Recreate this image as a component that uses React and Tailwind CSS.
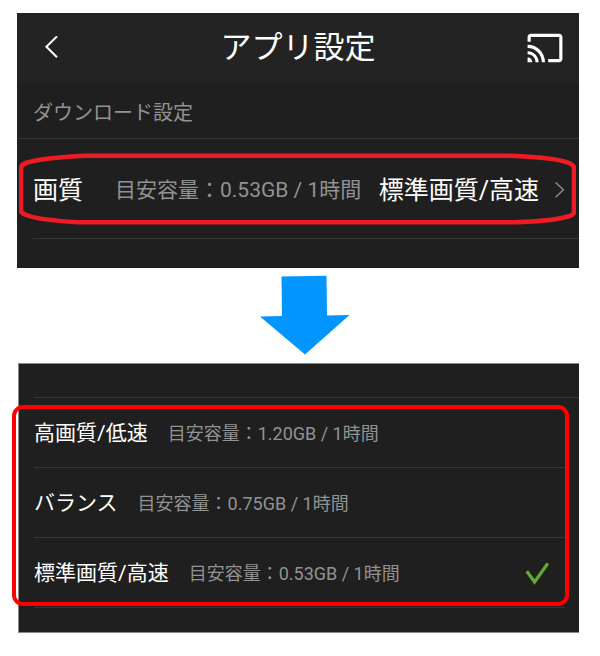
import React, { useState } from 'react';

// Download quality choices, with the storage used by one hour of video
const QUALITIES = [
  { id: 'high', label: '高画質/低速', size: '1.20GB' },
  { id: 'balance', label: 'バランス', size: '0.75GB' },
  { id: 'standard', label: '標準画質/高速', size: '0.53GB' },
];

function BackIcon() {
  return (
    <svg viewBox="0 0 14 24" className="w-[14px] h-6" fill="none" stroke="#fff" strokeWidth="2" aria-hidden="true">
      <path d="M13 0.4 L2.4 10.8 L13 21.2" />
    </svg>
  );
}

function CastIcon() {
  return (
    <svg viewBox="0 0 24 24" className="w-[38px] h-[38px]" fill="#fff" aria-hidden="true">
      <path d="M21 3H3c-1.1 0-2 .9-2 2v3h2V5h18v14h-7v2h7c1.1 0 2-.9 2-2V5c0-1.1-.9-2-2-2zM1 18v3h3c0-1.66-1.34-3-3-3zm0-4v2c2.76 0 5 2.24 5 5h2c0-3.87-3.13-7-7-7zm0-4v2c4.97 0 9 4.03 9 9h2c0-6.08-4.93-11-11-11z" />
    </svg>
  );
}

function ChevronIcon() {
  return (
    <svg viewBox="0 0 10 18" className="w-[10px] h-[18px] shrink-0" fill="none" stroke="#929292" strokeWidth="1.3" aria-hidden="true">
      <path d="M0.6 0.5 L8.4 7.8 L0.6 15.2" />
    </svg>
  );
}

function CheckIcon() {
  return (
    <svg viewBox="0 0 24 24" className="w-6 h-6 shrink-0" fill="none" stroke="#62ab2f" strokeWidth="3.2" aria-hidden="true">
      <path d="M1.8 9.2 L9.6 20 L22.8 1.4" />
    </svg>
  );
}

function DownArrow() {
  return (
    <svg viewBox="0 0 90 80" className="w-[90px] h-20" fill="#0095ff" aria-hidden="true">
      <path d="M21.5 1.5 L66.5 0.8 L67 40.5 L89.5 40 L45 79.5 L0 41.5 L22 41 Z" />
    </svg>
  );
}

// Hand drawn red outline, stretches with the row it marks
function RowMarker() {
  return (
    <svg
      viewBox="0 0 557 72"
      preserveAspectRatio="none"
      className="absolute inset-x-[2px] top-[14px] w-[calc(100%-5px)] h-[72px] pointer-events-none"
      fill="none"
      stroke="#ed1c24"
      strokeWidth="4.6"
      aria-hidden="true"
    >
      <path
        vectorEffect="non-scaling-stroke"
        d="M66 2.8 H491 C520 4 543 6.5 551 10.5 Q555 12.5 555 15 V59 Q555 62 549 63.5 C539 66.5 520 68.5 496 69.3 H59 C38 68 16 66 6 61.5 Q2 60 2 57 V15 Q2 12 7 10 C18 6.5 40 4 66 2.8 Z"
      />
    </svg>
  );
}

export default function App() {
  const [quality, setQuality] = useState('standard');

  return (
    <main className="bg-white pt-[13px] pb-6 pl-[17px] pr-[21px] font-[Roboto,'Noto_Sans_CJK_JP',sans-serif] text-white">

      {/* Settings screen */}
      <section className="bg-[#1f1f1f] pb-[29px]">
        <header className="flex items-center justify-between h-[70px] bg-[#232323] px-[15px]">
          <button type="button" aria-label="戻る" className="w-[38px] pl-3 flex">
            <BackIcon />
          </button>
          <h1 className="text-[31px] leading-10">アプリ設定</h1>
          <button type="button" aria-label="キャスト">
            <CastIcon />
          </button>
        </header>

        <h2 className="flex items-center h-14 px-4 pt-1 text-xl text-[#929292] border-b border-[#353535]">ダウンロード設定</h2>

        <div className="relative pl-4">
          <button type="button" className="flex items-center w-full h-[100px] pt-1 pr-[14px] whitespace-nowrap text-left border-b border-[#353535]">
            <span className="text-[25px]">画質</span>
            <span className="ml-8 text-[21px] text-[#929292]">目安容量：0.53GB / 1時間</span>
            <span className="ml-auto mr-4 text-[25px]">標準画質/高速</span>
            <ChevronIcon />
          </button>
          <RowMarker />
        </div>
      </section>

      <div className="flex justify-center pt-[7px] pb-2 pl-[14px]">
        <DownArrow />
      </div>

      {/* Quality picker */}
      <section className="ml-px bg-[#1f1f1f] border-t border-b border-l border-[#8a8a8a] pb-6">
        <div className="h-[34px] ml-[15px] border-b border-[#353535]" />
        <fieldset aria-label="画質" className="relative pl-[15px] pr-[14px]">
          {QUALITIES.map((q) => (
            <label key={q.id} className="flex items-center h-[70px] pt-[2px] whitespace-nowrap border-b border-[#353535] cursor-pointer">
              <input
                type="radio"
                name="quality"
                className="sr-only"
                value={q.id}
                checked={quality === q.id}
                onChange={() => setQuality(q.id)}
              />
              <span className="text-[21px]">{q.label}</span>
              <span className="ml-5 mr-auto text-lg text-[#929292]">目安容量：{q.size} / 1時間</span>
              {quality === q.id && <span className="pr-4"><CheckIcon /></span>}
            </label>
          ))}
          <div className="absolute -left-[7px] right-[10px] top-[7px] bottom-[2px] rounded-[11px] border-4 border-[#ff0000] pointer-events-none" />
        </fieldset>
      </section>

    </main>
  );
}
